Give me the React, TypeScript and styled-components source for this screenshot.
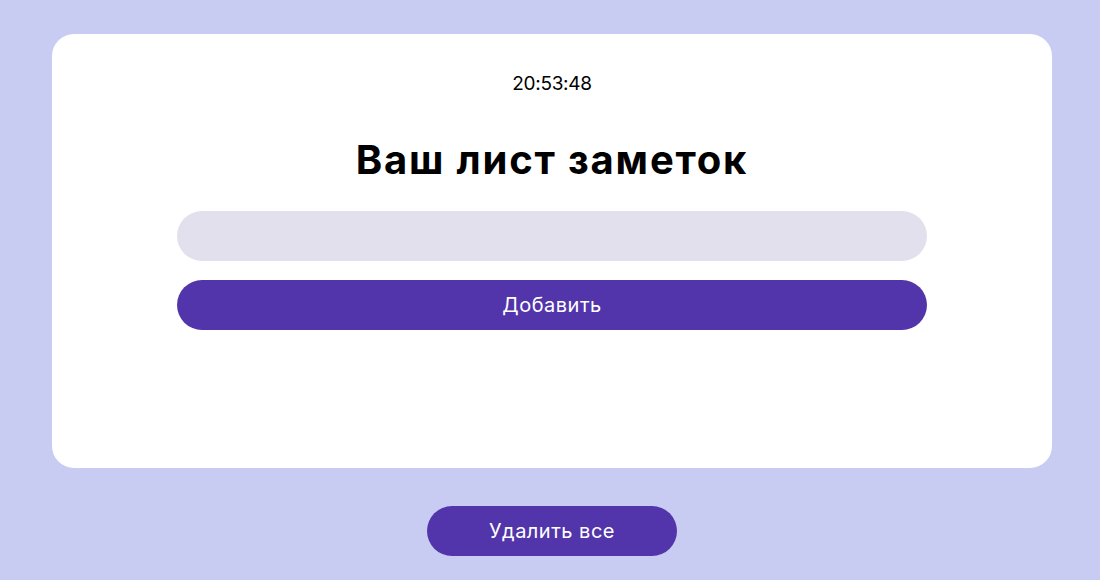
import React from "react";
import styled, { createGlobalStyle } from "styled-components";

const Global = createGlobalStyle`
  html, body { margin: 0; padding: 0; }
  body {
    background: #c9ccf2;
    font-family: Inter, "Noto Sans", sans-serif;
  }
`;

const Page = styled.div`
  display: flex;
  flex-direction: column;
  align-items: center;
  padding: 34px 0 0 4px;
`;

const Card = styled.div`
  width: 1000px;
  box-sizing: border-box;
  background: #ffffff;
  border-radius: 22px;
  display: flex;
  flex-direction: column;
  align-items: center;
  padding: 38px 0 138px;
`;

const Clock = styled.div`
  font-size: 19px;
  line-height: 24px;
  color: #000;
  letter-spacing: -0.3px;
`;

const Title = styled.h1`
  margin: 40px 0 0;
  font-size: 40px;
  line-height: 48px;
  font-weight: 700;
  color: #000;
  letter-spacing: 1.8px;
`;

const Form = styled.div`
  margin-top: 27px;
  width: 750px;
  display: flex;
  flex-direction: column;
  gap: 19px;
`;

const Input = styled.input`
  height: 50px;
  border: none;
  outline: none;
  border-radius: 25px;
  background: #e3e0ee;
  padding: 0 24px;
  font-family: inherit;
  font-size: 18px;
`;

const PillButton = styled.button<{ $width?: string }>`
  height: 50px;
  width: ${(p) => p.$width ?? "100%"};
  border: none;
  border-radius: 25px;
  background: #5235aa;
  color: #ffffff;
  font-family: inherit;
  font-size: 20px;
  letter-spacing: 0.5px;
  cursor: pointer;
`;

const Footer = styled.div`
  margin-top: 38px;
`;

export default function App() {
  return (
    <>
      <Global />
      <Page>
        <Card>
          <Clock>20:53:48</Clock>
          <Title>Ваш лист заметок</Title>
          <Form>
            <Input />
            <PillButton>Добавить</PillButton>
          </Form>
        </Card>
        <Footer>
          <PillButton $width="250px">Удалить все</PillButton>
        </Footer>
      </Page>
    </>
  );
}
